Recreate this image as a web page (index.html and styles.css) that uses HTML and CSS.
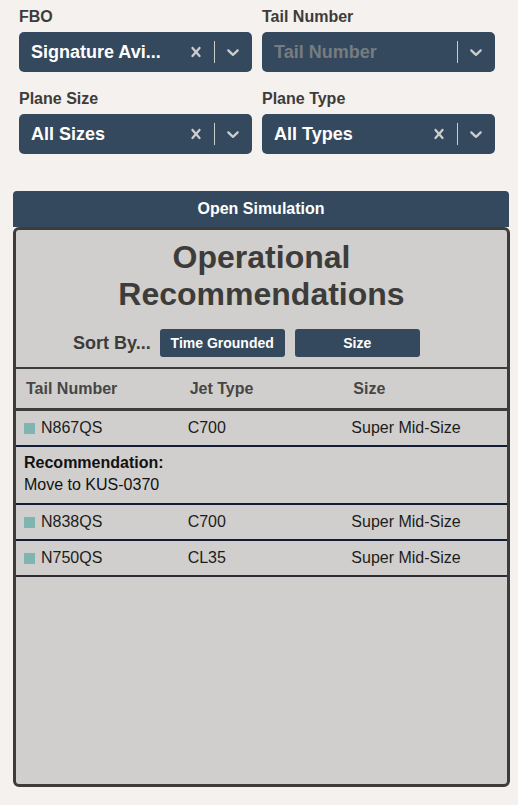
FILE: index.html
```html
<!DOCTYPE html>
<html lang="en">
<head>
<meta charset="utf-8">
<title>Operational Recommendations</title>
<link rel="stylesheet" href="styles.css">
</head>
<body>
<div class="filters">
  <div class="field">
    <label class="field-label">FBO</label>
    <div class="select">
      <span class="select-value">Signature Avi...</span>
      <span class="indicator"><svg viewBox="0 0 20 20" width="20" height="20"><path d="M14.348 14.849c-0.469 0.469-1.229 0.469-1.697 0l-2.651-3.030-2.651 3.029c-0.469 0.469-1.229 0.469-1.697 0-0.469-0.469-0.469-1.229 0-1.697l2.758-3.15-2.759-3.152c-0.469-0.469-0.469-1.228 0-1.697s1.228-0.469 1.697 0l2.652 3.031 2.651-3.031c0.469-0.469 1.228-0.469 1.697 0s0.469 1.229 0 1.697l-2.758 3.152 2.758 3.150c0.469 0.469 0.469 1.229 0 1.698z"/></svg></span>
      <span class="separator"></span>
      <span class="indicator"><svg viewBox="0 0 20 20" width="20" height="20"><path d="M4.516 7.548c0.436-0.446 1.043-0.481 1.576 0l3.908 3.747 3.908-3.747c0.533-0.481 1.141-0.446 1.574 0 0.436 0.445 0.408 1.197 0 1.615-0.406 0.418-4.695 4.502-4.695 4.502-0.217 0.223-0.502 0.335-0.787 0.335s-0.57-0.112-0.789-0.335c0 0-4.287-4.084-4.695-4.502s-0.436-1.170 0-1.615z"/></svg></span>
    </div>
  </div>
  <div class="field">
    <label class="field-label">Tail Number</label>
    <div class="select">
      <span class="select-value placeholder">Tail Number</span>
      <span class="separator"></span>
      <span class="indicator"><svg viewBox="0 0 20 20" width="20" height="20"><path d="M4.516 7.548c0.436-0.446 1.043-0.481 1.576 0l3.908 3.747 3.908-3.747c0.533-0.481 1.141-0.446 1.574 0 0.436 0.445 0.408 1.197 0 1.615-0.406 0.418-4.695 4.502-4.695 4.502-0.217 0.223-0.502 0.335-0.787 0.335s-0.57-0.112-0.789-0.335c0 0-4.287-4.084-4.695-4.502s-0.436-1.170 0-1.615z"/></svg></span>
    </div>
  </div>
  <div class="field">
    <label class="field-label">Plane Size</label>
    <div class="select">
      <span class="select-value">All Sizes</span>
      <span class="indicator"><svg viewBox="0 0 20 20" width="20" height="20"><path d="M14.348 14.849c-0.469 0.469-1.229 0.469-1.697 0l-2.651-3.030-2.651 3.029c-0.469 0.469-1.229 0.469-1.697 0-0.469-0.469-0.469-1.229 0-1.697l2.758-3.15-2.759-3.152c-0.469-0.469-0.469-1.228 0-1.697s1.228-0.469 1.697 0l2.652 3.031 2.651-3.031c0.469-0.469 1.228-0.469 1.697 0s0.469 1.229 0 1.697l-2.758 3.152 2.758 3.150c0.469 0.469 0.469 1.229 0 1.698z"/></svg></span>
      <span class="separator"></span>
      <span class="indicator"><svg viewBox="0 0 20 20" width="20" height="20"><path d="M4.516 7.548c0.436-0.446 1.043-0.481 1.576 0l3.908 3.747 3.908-3.747c0.533-0.481 1.141-0.446 1.574 0 0.436 0.445 0.408 1.197 0 1.615-0.406 0.418-4.695 4.502-4.695 4.502-0.217 0.223-0.502 0.335-0.787 0.335s-0.57-0.112-0.789-0.335c0 0-4.287-4.084-4.695-4.502s-0.436-1.170 0-1.615z"/></svg></span>
    </div>
  </div>
  <div class="field">
    <label class="field-label">Plane Type</label>
    <div class="select">
      <span class="select-value">All Types</span>
      <span class="indicator"><svg viewBox="0 0 20 20" width="20" height="20"><path d="M14.348 14.849c-0.469 0.469-1.229 0.469-1.697 0l-2.651-3.030-2.651 3.029c-0.469 0.469-1.229 0.469-1.697 0-0.469-0.469-0.469-1.229 0-1.697l2.758-3.15-2.759-3.152c-0.469-0.469-0.469-1.228 0-1.697s1.228-0.469 1.697 0l2.652 3.031 2.651-3.031c0.469-0.469 1.228-0.469 1.697 0s0.469 1.229 0 1.697l-2.758 3.152 2.758 3.150c0.469 0.469 0.469 1.229 0 1.698z"/></svg></span>
      <span class="separator"></span>
      <span class="indicator"><svg viewBox="0 0 20 20" width="20" height="20"><path d="M4.516 7.548c0.436-0.446 1.043-0.481 1.576 0l3.908 3.747 3.908-3.747c0.533-0.481 1.141-0.446 1.574 0 0.436 0.445 0.408 1.197 0 1.615-0.406 0.418-4.695 4.502-4.695 4.502-0.217 0.223-0.502 0.335-0.787 0.335s-0.57-0.112-0.789-0.335c0 0-4.287-4.084-4.695-4.502s-0.436-1.170 0-1.615z"/></svg></span>
    </div>
  </div>
</div>

<button class="sim-button">Open Simulation</button>

<section class="panel">
  <h2 class="panel-title">Operational<br>Recommendations</h2>
  <div class="sort-row">
    <span class="sort-label">Sort By...</span>
    <button class="sort-btn">Time Grounded</button>
    <button class="sort-btn">Size</button>
  </div>
  <div class="table">
    <div class="row head">
      <div class="cell">Tail Number</div>
      <div class="cell">Jet Type</div>
      <div class="cell">Size</div>
    </div>
    <div class="row item">
      <div class="cell"><span class="dot"></span>N867QS</div>
      <div class="cell">C700</div>
      <div class="cell">Super Mid-Size</div>
    </div>
    <div class="rec">
      <div class="rec-title">Recommendation:</div>
      <div class="rec-text">Move to KUS-0370</div>
    </div>
    <div class="row item">
      <div class="cell"><span class="dot"></span>N838QS</div>
      <div class="cell">C700</div>
      <div class="cell">Super Mid-Size</div>
    </div>
    <div class="row item last">
      <div class="cell"><span class="dot"></span>N750QS</div>
      <div class="cell">CL35</div>
      <div class="cell">Super Mid-Size</div>
    </div>
  </div>
</section>
</body>
</html>
```

FILE: styles.css
```css
* {
  box-sizing: border-box;
}

html, body {
  margin: 0;
  background: #f4f1ee;
}

body {
  font-family: "Liberation Sans", Arial, sans-serif;
  padding-top: 8px;
  width: 518px;
}

.filters {
  display: grid;
  grid-template-columns: 233px 233px;
  column-gap: 10px;
  row-gap: 18px;
  padding-left: 19px;
}

.field {
  display: flex;
  flex-direction: column;
  gap: 6px;
}

.field-label {
  font-size: 16px;
  line-height: 18px;
  font-weight: bold;
  color: #3d3c3a;
}

.select {
  display: flex;
  align-items: center;
  height: 40px;
  background: #34495e;
  border-radius: 5px;
  padding-left: 12px;
  padding-right: 1px;
}

.select-value {
  flex: 1;
  min-width: 0;
  font-size: 18px;
  font-weight: bold;
  color: #ffffff;
  white-space: nowrap;
}

.select-value.placeholder {
  color: #787c80;
}

.indicator {
  display: flex;
  align-items: center;
  justify-content: center;
  width: 36px;
  height: 40px;
}

.indicator svg {
  fill: #cccccc;
}

.separator {
  width: 1px;
  height: 22px;
  background: #cccccc;
}

.sim-button {
  display: block;
  margin: 37px 0 0 13px;
  width: 496px;
  height: 36px;
  border: none;
  border-radius: 4px 4px 0 0;
  background: #34495e;
  color: #ffffff;
  font-family: "Liberation Sans", Arial, sans-serif;
  font-size: 16px;
  font-weight: bold;
  padding: 0;
}

.panel {
  margin-left: 13px;
  width: 497px;
  height: 560px;
  border: 3px solid #3d3c3a;
  border-radius: 6px;
  background: #d0cfcd;
  padding-top: 9px;
}

.panel-title {
  margin: 0;
  text-align: center;
  font-size: 32px;
  line-height: 37px;
  font-weight: bold;
  color: #3d3c3a;
}

.sort-row {
  display: flex;
  align-items: center;
  margin-top: 16px;
  padding-left: 57px;
  height: 28px;
}

.sort-label {
  font-size: 18px;
  font-weight: bold;
  color: #3d3c3a;
  margin-right: 9px;
}

.sort-btn {
  width: 125px;
  height: 28px;
  border: none;
  border-radius: 3px;
  background: #34495e;
  color: #ffffff;
  font-family: "Liberation Sans", Arial, sans-serif;
  font-size: 14px;
  font-weight: bold;
  padding: 0;
  margin-right: 10px;
}

.table {
  margin-top: 10px;
  border-top: 2px solid #3d3c3a;
}

.row {
  display: grid;
  grid-template-columns: 1fr 1fr 1fr;
}

.row.head {
  border-bottom: 3px solid #3d3c3a;
}

.row.head .cell {
  padding: 10px 0 10px 10px;
  font-size: 16px;
  line-height: 19px;
  font-weight: bold;
  color: #474644;
}

.row.item {
  border-bottom: 2px solid #131d35;
}

.row.item.last {
  border-bottom-color: #2b2d33;
}

.row.item .cell {
  display: flex;
  align-items: center;
  padding: 8px 0 8px 8px;
  font-size: 16px;
  line-height: 18px;
  color: #1c1c1c;
}

.dot {
  width: 11px;
  height: 11px;
  background: #7fb4b0;
  margin-right: 6px;
}

.rec {
  padding: 5px 8px 7px 8px;
  border-bottom: 2px solid #131d35;
  font-size: 16px;
  line-height: 22px;
  color: #111111;
}

.rec-title {
  font-weight: bold;
}
```
